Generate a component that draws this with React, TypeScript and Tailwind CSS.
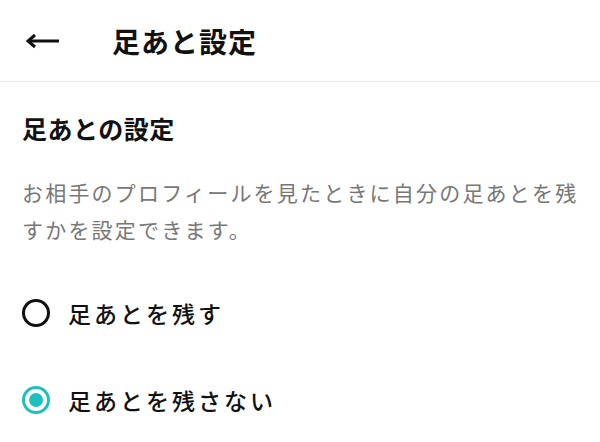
import { useState } from "react";

const font = { fontFamily: '"Noto Sans CJK JP", "Noto Sans", sans-serif' };

type Option = { id: string; label: string };

const options: Option[] = [
  { id: "leave", label: "足あとを残す" },
  { id: "hide", label: "足あとを残さない" },
];

export default function App() {
  const [selected, setSelected] = useState("hide");

  return (
    <div className="w-[600px] h-[442px] bg-white text-[#111] overflow-hidden" style={font}>
      <header className="flex items-center h-[82px] border-b border-[#e6e6e6]">
        <button className="w-[86px] pl-[26px] flex items-center">
          <svg width="34" height="16" viewBox="0 0 34 16" fill="none">
            <path d="M33 8H3" stroke="#111" strokeWidth="3" />
            <path d="M9 2L2 8l7 6" stroke="#111" strokeWidth="3" strokeLinejoin="miter" />
          </svg>
        </button>
        <h1 className="ml-[26px] text-[28px] font-bold tracking-[1px] leading-none">足あと設定</h1>
      </header>

      <section className="pl-[22px] pr-[12px] pt-[34px]">
        <h2 className="text-[25px] font-bold leading-none tracking-[0.5px]">足あとの設定</h2>
        <p className="mt-[33px] text-[21px] leading-[37px] tracking-[2.2px] text-[#777]">
          お相手のプロフィールを見たときに自分の足あとを残すかを設定できます。
        </p>

        <div className="mt-[51px] flex flex-col gap-[59px]">
          {options.map((o) => {
            const on = selected === o.id;
            return (
              <label key={o.id} className="flex items-center gap-[18px] cursor-pointer" onClick={() => setSelected(o.id)}>
                <span
                  className={
                    on
                      ? "w-[28px] h-[28px] rounded-full border-[3px] border-[#1fbfbf] flex items-center justify-center"
                      : "w-[28px] h-[28px] rounded-full border-[3px] border-[#111] flex items-center justify-center"
                  }
                >
                  {on && <span className="w-[14px] h-[14px] rounded-full bg-[#1fbfbf]" />}
                </span>
                <span className="text-[23px] leading-none tracking-[3px] font-medium">{o.label}</span>
              </label>
            );
          })}
        </div>
      </section>
    </div>
  );
}
